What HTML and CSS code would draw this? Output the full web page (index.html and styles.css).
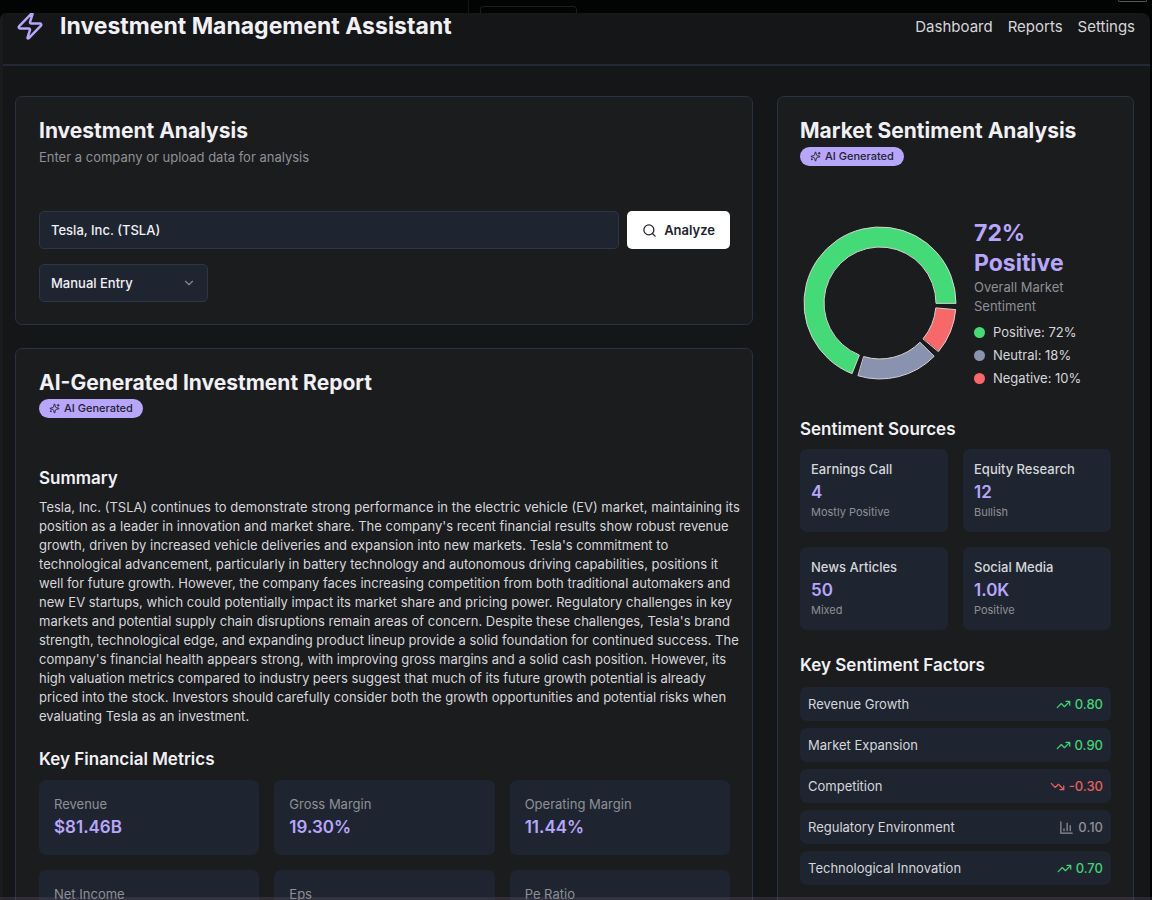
FILE: index.html
```html
<!DOCTYPE html>
<html lang="en">
<head>
<meta charset="utf-8">
<meta name="viewport" content="width=device-width, initial-scale=1">
<title>Investment Management Assistant</title>
<link rel="stylesheet" href="styles.css">
</head>
<body>
<svg class="defs" aria-hidden="true">
  <symbol id="sparkles" viewBox="0 0 24 24"><path d="M9.94 15.5A2 2 0 0 0 8.5 14.06l-6.14-1.58a.5.5 0 0 1 0-.96L8.5 9.94A2 2 0 0 0 9.94 8.5l1.58-6.14a.5.5 0 0 1 .96 0L14.06 8.5a2 2 0 0 0 1.44 1.44l6.14 1.58a.5.5 0 0 1 0 .96l-6.14 1.58a2 2 0 0 0-1.44 1.44l-1.58 6.14a.5.5 0 0 1-.96 0z"/><path d="M20 3v4M22 5h-4M4 17v2M5 18H3"/></symbol>
  <symbol id="trend-up" viewBox="0 0 24 24"><path d="M22 7 13.5 15.5 8.5 10.500 2 17M16 7h6v6"/></symbol>
  <symbol id="trend-down" viewBox="0 0 24 24"><path d="M22 17 13.500 8.500 8.500 13.500 2 7M16 17h6v-6"/></symbol>
  <symbol id="bars" viewBox="0 0 24 24"><path d="M3 3v18h18M18 17V9M13 17V5M8 17v-3"/></symbol>
</svg>
<div class="backdrop" aria-hidden="true"><span class="backdrop-line"></span><span class="backdrop-tab"></span><span class="backdrop-chip"></span></div>
<div class="shell">
  <header class="topbar">
    <div class="brand">
      <svg class="bolt" viewBox="0 0 24 24" aria-hidden="true"><path d="M4 14a1 1 0 0 1-.78-1.63l9.900-10.200a.5.5 0 0 1 .86.46l-1.920 6.020A1 1 0 0 0 13 10h7a1 1 0 0 1 .78 1.630l-9.900 10.200a.5.5 0 0 1-.86-.46l1.920-6.020A1 1 0 0 0 11 14z"/></svg>
      <h1>Investment Management Assistant</h1>
    </div>
    <nav><a href="#dashboard">Dashboard</a><a href="#reports">Reports</a><a href="#settings">Settings</a></nav>
  </header>
  <main class="layout">
    <div class="primary">
      <section class="card">
        <h2>Investment Analysis</h2>
        <p class="sub">Enter a company or upload data for analysis</p>
        <form class="query">
          <div class="query-row">
            <input class="field" type="text" aria-label="Company" value="Tesla, Inc. (TSLA)">
            <button class="analyze" type="button"><svg viewBox="0 0 24 24" aria-hidden="true"><circle cx="11" cy="11" r="8"/><path d="m21 21-4.300-4.300"/></svg>Analyze</button>
          </div>
          <div class="select-wrap">
            <select class="field" aria-label="Data source"><option>Manual Entry</option><option>File Upload</option></select>
            <svg viewBox="0 0 24 24" aria-hidden="true"><path d="m6 9 6 6 6-6"/></svg>
          </div>
        </form>
      </section>
      <section class="card">
        <h2>AI-Generated Investment Report</h2>
        <span class="badge"><svg aria-hidden="true"><use href="#sparkles"/></svg>AI Generated</span>
        <div class="report">
          <h3>Summary</h3>
          <p class="summary">Tesla, Inc. (TSLA) continues to demonstrate strong performance in the electric vehicle (EV) market, maintaining its<br>
          position as a leader in innovation and market share. The company's recent financial results show robust revenue<br>
          growth, driven by increased vehicle deliveries and expansion into new markets. Tesla's commitment to<br>
          technological advancement, particularly in battery technology and autonomous driving capabilities, positions it<br>
          well for future growth. However, the company faces increasing competition from both traditional automakers and<br>
          new EV startups, which could potentially impact its market share and pricing power. Regulatory challenges in key<br>
          markets and potential supply chain disruptions remain areas of concern. Despite these challenges, Tesla's brand<br>
          strength, technological edge, and expanding product lineup provide a solid foundation for continued success. The<br>
          company's financial health appears strong, with improving gross margins and a solid cash position. However, its<br>
          high valuation metrics compared to industry peers suggest that much of its future growth potential is already<br>
          priced into the stock. Investors should carefully consider both the growth opportunities and potential risks when<br>
          evaluating Tesla as an investment.</p>
          <h3>Key Financial Metrics</h3>
          <div class="metrics">
            <div class="metric"><p>Revenue</p><strong>$81.46B</strong></div>
            <div class="metric"><p>Gross Margin</p><strong>19.30%</strong></div>
            <div class="metric"><p>Operating Margin</p><strong>11.44%</strong></div>
            <div class="metric"><p>Net Income</p></div>
            <div class="metric"><p>Eps</p></div>
            <div class="metric"><p>Pe Ratio</p></div>
          </div>
        </div>
      </section>
    </div>
    <aside class="card sentiment">
      <h2>Market Sentiment Analysis</h2>
      <span class="badge"><svg aria-hidden="true"><use href="#sparkles"/></svg>AI Generated</span>
      <div class="overview">
        <svg class="donut" viewBox="0 0 154 154" role="img" aria-label="Sentiment split">
          <path class="pos" d="M153 77A76 76 0 1 0 49.020 147.660L56.390 129.070A56 56 0 1 1 133 77Z"/>
          <path class="neu" d="M55.290 149.830A76 76 0 0 0 131.210 130.270L116.940 116.250A56 56 0 0 1 61 130.660Z"/>
          <path class="neg" d="M135.640 125.340A76 76 0 0 0 152.710 83.630L132.790 81.880A56 56 0 0 1 120.210 112.620Z"/>
        </svg>
        <div class="overview-text">
          <p class="score">72% Positive</p>
          <p class="caption">Overall Market Sentiment</p>
          <ul class="legend">
            <li><i class="dot pos"></i>Positive: 72%</li>
            <li><i class="dot neu"></i>Neutral: 18%</li>
            <li><i class="dot neg"></i>Negative: 10%</li>
          </ul>
        </div>
      </div>
      <h3>Sentiment Sources</h3>
      <div class="sources">
        <div class="source"><h4>Earnings Call</h4><strong>4</strong><p>Mostly Positive</p></div>
        <div class="source"><h4>Equity Research</h4><strong>12</strong><p>Bullish</p></div>
        <div class="source"><h4>News Articles</h4><strong>50</strong><p>Mixed</p></div>
        <div class="source"><h4>Social Media</h4><strong>1.0K</strong><p>Positive</p></div>
      </div>
      <h3>Key Sentiment Factors</h3>
      <ul class="factors">
        <li>Revenue Growth<span class="up"><svg aria-hidden="true"><use href="#trend-up"/></svg>0.80</span></li>
        <li>Market Expansion<span class="up"><svg aria-hidden="true"><use href="#trend-up"/></svg>0.90</span></li>
        <li>Competition<span class="down"><svg aria-hidden="true"><use href="#trend-down"/></svg>-0.30</span></li>
        <li>Regulatory Environment<span class="flat"><svg aria-hidden="true"><use href="#bars"/></svg>0.10</span></li>
        <li>Technological Innovation<span class="up"><svg aria-hidden="true"><use href="#trend-up"/></svg>0.70</span></li>
      </ul>
    </aside>
  </main>
</div>
<div class="edge" aria-hidden="true"></div>
</body>
</html>
```
FILE: styles.css
```css
:root {
  --line: #293241;
  --tile: #1e2530;
  --accent: #b8a6fb;
  --text: #d6d6da;
  --bright: #f1f1f5;
  --muted: #8f9096;
}
* { box-sizing: border-box; }
body, h1, h2, h3, h4, p, ul { margin: 0; padding: 0; }
ul { list-style: none; }
body {
  display: flex;
  flex-direction: column;
  height: 100vh;
  overflow: hidden;
  background: #020303;
  color: var(--text);
  font: 400 13px/19px Inter, "Liberation Sans", sans-serif;
}
svg { fill: none; stroke: currentColor; stroke-width: 2; stroke-linecap: round; stroke-linejoin: round; flex: none; }
.defs { position: absolute; width: 0; height: 0; }

.backdrop { display: flex; flex: none; align-items: flex-end; height: 13px; padding-right: 5px; }
.backdrop-line { width: 1px; height: 13px; margin-left: 468px; background: #151515; }
.backdrop-tab { width: 97px; height: 7px; margin-left: 11px; border: 1px solid #1d1d1e; border-bottom: 0; border-radius: 4px 4px 0 0; }
.backdrop-chip { align-self: flex-start; width: 29px; height: 2px; margin-left: auto; border: 1px solid #55565a; border-top: 0; border-radius: 0 0 3px 3px; }

.shell { flex: 1; min-height: 0; overflow: hidden auto; scrollbar-width: none; margin-right: 2px; border-left: 3px solid #1a1b1d; border-radius: 6px 8px 0 0; background: #151618; }
.topbar { display: flex; justify-content: space-between; height: 53px; padding: 0 15px 0 12px; border-bottom: 2px solid #222935; }
.brand { display: flex; align-items: center; gap: 15px; height: 26px; }
.bolt { width: 30px; height: 30px; color: var(--accent); }
h1 { font-size: 23px; line-height: 26px; font-weight: 700; color: var(--bright); }
nav { display: flex; gap: 15px; height: 26px; align-items: center; }
nav a { color: var(--text); font-size: 15px; text-decoration: none; }

.layout { display: grid; grid-template-columns: repeat(3, minmax(0, 1fr)); gap: 24px; padding: 30px 16px 0 12px; align-items: start; }
.primary { grid-column: span 2; display: flex; flex-direction: column; gap: 23px; }
.card { padding: 22px 22px 22px 23px; border: 1px solid var(--line); border-radius: 7px; background: #1b1c1e; }
.sentiment { padding-left: 22px; }
h2 { font-size: 21px; line-height: 24px; font-weight: 700; color: var(--bright); }
h3 { font-size: 17px; line-height: 24px; font-weight: 600; color: var(--bright); }
.sub { margin-top: 5px; color: var(--muted); }

.query { display: flex; flex-direction: column; gap: 15px; margin-top: 44px; }
.query-row { display: flex; gap: 8px; }
.field { width: 100%; min-width: 0; height: 38px; padding: 0 11px; border: 1px solid #2d3646; border-radius: 5px; background: var(--tile); color: var(--bright); font: inherit; font-weight: 500; appearance: none; }
.query-row .field { flex: 1; }
.analyze { display: flex; flex: none; align-items: center; gap: 7px; height: 38px; padding: 0 15px; border: 0; border-radius: 5px; background: #fff; color: #20242e; font: inherit; font-weight: 600; }
.analyze svg { width: 15px; height: 15px; }
.select-wrap { position: relative; width: 169px; }
.select-wrap svg { position: absolute; right: 12px; top: 12px; width: 14px; height: 14px; color: #85878c; pointer-events: none; }

.badge { display: flex; width: fit-content; align-items: center; gap: 4px; height: 19px; margin-top: 4px; padding: 0 10px; border-radius: 10px; background: var(--accent); color: #23222e; font-size: 11px; line-height: 19px; font-weight: 500; }
.badge svg { width: 11px; height: 11px; }
.report { margin-top: 48px; }
.summary { margin: 8px 0 21px; white-space: nowrap; }
.report .metrics { margin-top: 9px; }
.metrics { display: grid; grid-template-columns: repeat(3, minmax(0, 1fr)); gap: 15px; }
.metric { min-height: 75px; padding: 15px; border-radius: 7px; background: var(--tile); }
.metric p { color: var(--muted); }
.metric strong { display: block; font-size: 17px; line-height: 26px; font-weight: 600; color: var(--accent); }

.overview { display: flex; align-items: center; gap: 17px; margin: 52px 0 29px; padding-left: 3px; }
.donut { width: 154px; height: 154px; overflow: visible; }
.donut path { stroke: #d4d4d4; stroke-width: 1; }
.donut .pos { fill: #45da78; }
.donut .neu { fill: #8992af; }
.donut .neg { fill: #f96868; }
.overview-text { flex: 1; min-width: 0; }
.score { width: min-content; font-size: 23px; line-height: 30px; font-weight: 700; color: var(--accent); }
.caption { width: 100px; color: var(--muted); }
.legend { display: grid; gap: 4px; margin-top: 7px; }
.legend li { display: flex; align-items: center; gap: 8px; white-space: nowrap; }
.dot { width: 11px; height: 11px; border-radius: 50%; }
.dot.pos { background: #45da78; }
.dot.neu { background: #8992af; }
.dot.neg { background: #f96868; }

.sources { display: grid; grid-template-columns: 1fr 1fr; gap: 15px; margin: 8px 0 23px; }
.source { min-height: 83px; padding: 11px; border-radius: 7px; background: var(--tile); }
h4 { font-size: 13px; line-height: 19px; font-weight: 500; color: var(--text); }
.source strong { display: block; font-size: 17px; line-height: 26px; font-weight: 600; color: var(--accent); }
.source p { font-size: 11px; line-height: 15px; color: var(--muted); }
.factors { display: grid; gap: 7px; margin-top: 10px; }
.factors li { display: flex; align-items: center; justify-content: space-between; height: 34px; padding: 0 8px; border-radius: 7px; background: var(--tile); }
.factors span { display: flex; align-items: center; gap: 4px; font-weight: 500; }
.factors svg { width: 15px; height: 15px; }
.up { color: #42d374; }
.down { color: #e75f61; }
.flat { color: var(--muted); }
.edge { position: fixed; inset: auto 0 0 0; height: 3px; background: rgb(110 100 120 / 25%); }
```
